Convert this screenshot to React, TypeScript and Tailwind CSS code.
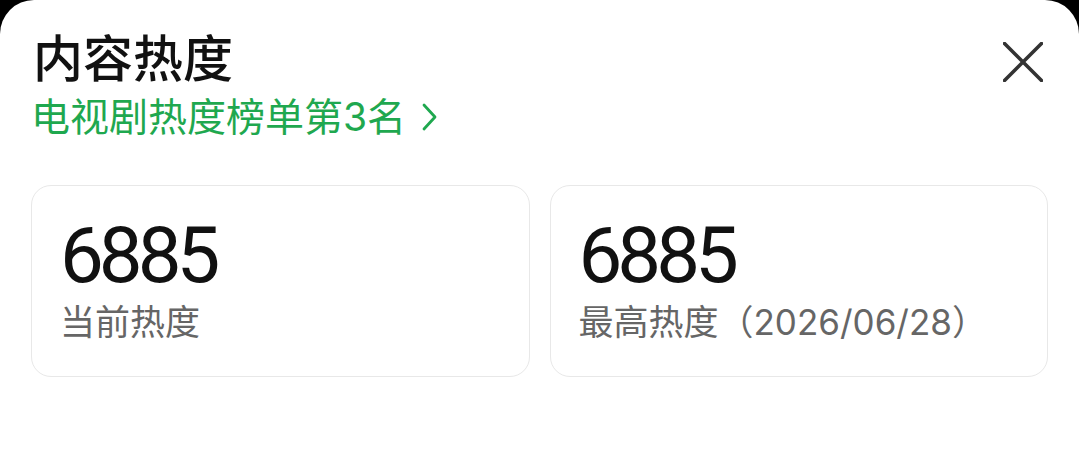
const cjk = 'Inter, "Noto Sans CJK SC", "Noto Sans", sans-serif'

function StatCard({ value, label }: { value: string; label: string }) {
  return (
    <div className="flex-1 h-[192px] rounded-[20px] border border-[#e8e8e8] pl-[28px] pt-[30px]">
      <div
        className="text-[78px] leading-[80px] font-normal text-[#111] tracking-[-5px]"
        style={{ fontFamily: 'Roboto, sans-serif' }}
      >
        {value}
      </div>
      <div className="mt-[4px] text-[35px] leading-[44px] text-[#666]">{label}</div>
    </div>
  )
}

export default function App() {
  return (
    <div className="w-[1079px] h-[470px] bg-black" style={{ fontFamily: cjk }}>
      <div className="h-full bg-white rounded-t-[34px] px-[31px] relative">
        <div className="pt-[26px]">
          <h1 className="pl-[2px] text-[50px] leading-[66px] font-medium text-[#111]">内容热度</h1>
          <div className="flex items-center text-[39px] leading-[50px] text-[#1fa84f]">
            <span>电视剧热度榜单第3名</span>
            <svg width="20" height="30" viewBox="0 0 20 30" className="ml-[13px]" fill="none">
              <path d="M5 3 L16 15 L5 27" stroke="#1fa84f" strokeWidth="2.8" strokeLinecap="round" strokeLinejoin="round" />
            </svg>
          </div>
        </div>
        <button className="absolute right-[36px] top-[42px]">
          <svg width="40" height="40" viewBox="0 0 40 40" fill="none">
            <path d="M1.5 1.5 L38.5 38.5 M38.5 1.5 L1.5 38.5" stroke="#333" strokeWidth="3.6" strokeLinecap="round" />
          </svg>
        </button>
        <div className="flex gap-[20px] mt-[43px]">
          <StatCard value="6885" label="当前热度" />
          <StatCard value="6885" label="最高热度（2026/06/28）" />
        </div>
      </div>
    </div>
  )
}
